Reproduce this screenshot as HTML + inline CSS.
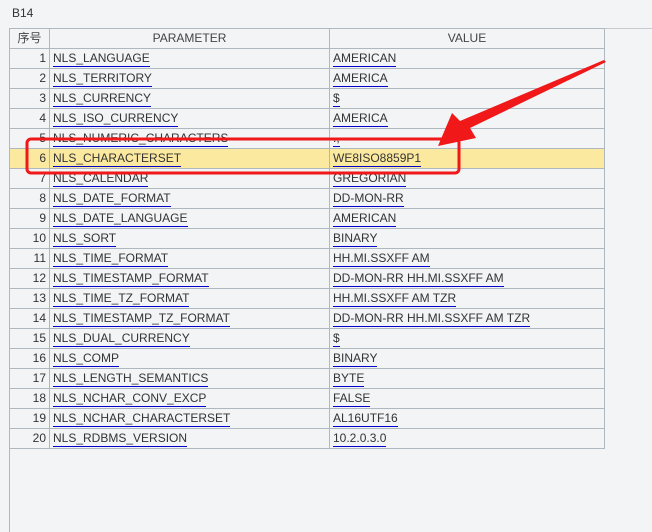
<!DOCTYPE html><html><head><meta charset="utf-8"><style>
body{margin:0;width:652px;height:532px;background:#f2f4f5;font-family:"Liberation Sans","Noto Sans CJK SC",sans-serif;font-size:12px;color:#333;position:relative;overflow:hidden}
.t{position:absolute;left:12px;top:6px;font-size:12px}
.hl{position:absolute;left:9px;top:28px;width:643px;height:1px;background:#c4cacf}
.vl{position:absolute;left:9px;top:28px;width:1px;height:504px;background:#b0b8bf}
table{position:absolute;left:9px;top:28px;border-collapse:collapse}
td{border:1px solid #b0b8bf;height:19px;padding:0 3px;line-height:19px;white-space:nowrap}
td.n{text-align:right;width:33px}
td.p{width:273px}td.v{width:268px}
th{border:1px solid #b0b8bf;height:19px;font-weight:normal;color:#444;line-height:19px;padding:0}
span{border-bottom:1px solid #0000cc;line-height:15px;display:inline-block}
tr.y td{background:#fce9a0}
svg{position:absolute;left:0;top:0}
</style></head><body>
<div class="t">B14</div>
<div class="hl"></div><div class="vl"></div>
<table>
<tr><th>序号</th><th>PARAMETER</th><th>VALUE</th></tr>
<tr><td class="n">1</td><td class="p"><span>NLS_LANGUAGE</span></td><td class="v"><span>AMERICAN</span></td></tr>
<tr><td class="n">2</td><td class="p"><span>NLS_TERRITORY</span></td><td class="v"><span>AMERICA</span></td></tr>
<tr><td class="n">3</td><td class="p"><span>NLS_CURRENCY</span></td><td class="v"><span>$</span></td></tr>
<tr><td class="n">4</td><td class="p"><span>NLS_ISO_CURRENCY</span></td><td class="v"><span>AMERICA</span></td></tr>
<tr><td class="n">5</td><td class="p"><span>NLS_NUMERIC_CHARACTERS</span></td><td class="v"><span>.,</span></td></tr>
<tr class="y"><td class="n">6</td><td class="p"><span>NLS_CHARACTERSET</span></td><td class="v"><span>WE8ISO8859P1</span></td></tr>
<tr><td class="n">7</td><td class="p"><span>NLS_CALENDAR</span></td><td class="v"><span>GREGORIAN</span></td></tr>
<tr><td class="n">8</td><td class="p"><span>NLS_DATE_FORMAT</span></td><td class="v"><span>DD-MON-RR</span></td></tr>
<tr><td class="n">9</td><td class="p"><span>NLS_DATE_LANGUAGE</span></td><td class="v"><span>AMERICAN</span></td></tr>
<tr><td class="n">10</td><td class="p"><span>NLS_SORT</span></td><td class="v"><span>BINARY</span></td></tr>
<tr><td class="n">11</td><td class="p"><span>NLS_TIME_FORMAT</span></td><td class="v"><span>HH.MI.SSXFF AM</span></td></tr>
<tr><td class="n">12</td><td class="p"><span>NLS_TIMESTAMP_FORMAT</span></td><td class="v"><span>DD-MON-RR HH.MI.SSXFF AM</span></td></tr>
<tr><td class="n">13</td><td class="p"><span>NLS_TIME_TZ_FORMAT</span></td><td class="v"><span>HH.MI.SSXFF AM TZR</span></td></tr>
<tr><td class="n">14</td><td class="p"><span>NLS_TIMESTAMP_TZ_FORMAT</span></td><td class="v"><span>DD-MON-RR HH.MI.SSXFF AM TZR</span></td></tr>
<tr><td class="n">15</td><td class="p"><span>NLS_DUAL_CURRENCY</span></td><td class="v"><span>$</span></td></tr>
<tr><td class="n">16</td><td class="p"><span>NLS_COMP</span></td><td class="v"><span>BINARY</span></td></tr>
<tr><td class="n">17</td><td class="p"><span>NLS_LENGTH_SEMANTICS</span></td><td class="v"><span>BYTE</span></td></tr>
<tr><td class="n">18</td><td class="p"><span>NLS_NCHAR_CONV_EXCP</span></td><td class="v"><span>FALSE</span></td></tr>
<tr><td class="n">19</td><td class="p"><span>NLS_NCHAR_CHARACTERSET</span></td><td class="v"><span>AL16UTF16</span></td></tr>
<tr><td class="n">20</td><td class="p"><span>NLS_RDBMS_VERSION</span></td><td class="v"><span>10.2.0.3.0</span></td></tr>
</table>
<svg width="652" height="532">
<rect x="27" y="139" width="432" height="34" rx="4" fill="none" stroke="#f01818" stroke-width="3"/>
<polygon points="606,62 470,128 476,138 438,146 452,113 460,121 604,60" fill="#f01818"/>
</svg>
</body></html>
